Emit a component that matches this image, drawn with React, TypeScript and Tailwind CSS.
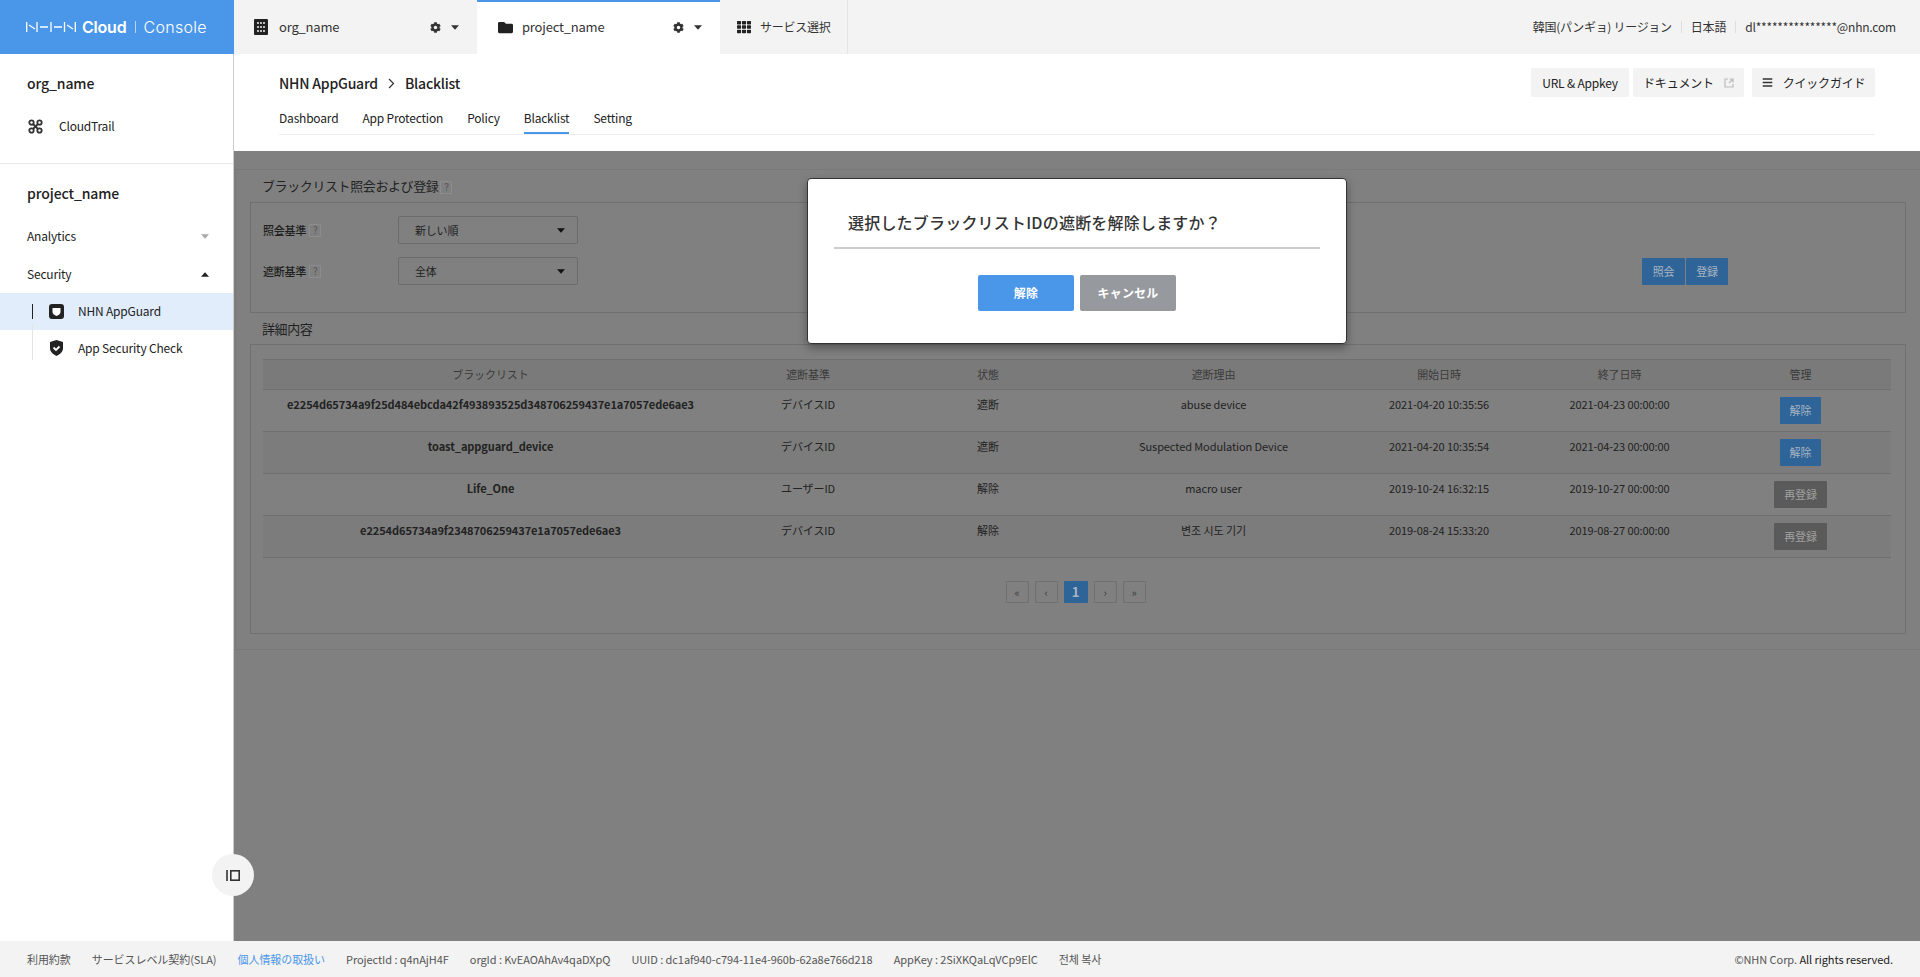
import { FaCog, FaFolder, FaTh, FaBars } from "react-icons/fa";

const font = { fontFamily: '"Noto Sans CJK JP", "Noto Sans CJK KR", sans-serif' };

function Caret({ up, className }: { up?: boolean; className?: string }) {
  return (
    <svg width="8" height="5" viewBox="0 0 9 5" className={className}>
      <path d={up ? "M4.5 0 9 5H0z" : "M0 0h9L4.5 5z"} fill="currentColor" />
    </svg>
  );
}

function Help() {
  return (
    <span className="inline-flex h-[13px] w-[12px] items-center justify-center border border-[#8c8c8c] text-[10px] leading-none font-normal text-[#555]">
      ?
    </span>
  );
}

const rows = [
  ["e2254d65734a9f25d484ebcda42f493893525d348706259437e1a7057ede6ae3", "デバイスID", "遮断", "abuse device", "2021-04-20 10:35:56", "2021-04-23 00:00:00", "解除"],
  ["toast_appguard_device", "デバイスID", "遮断", "Suspected Modulation Device", "2021-04-20 10:35:54", "2021-04-23 00:00:00", "解除"],
  ["Life_One", "ユーザーID", "解除", "macro user", "2019-10-24 16:32:15", "2019-10-27 00:00:00", "再登録"],
  ["e2254d65734a9f2348706259437e1a7057ede6ae3", "デバイスID", "解除", "변조 시도 기기", "2019-08-24 15:33:20", "2019-08-27 00:00:00", "再登録"],
];

function TopBar() {
  return (
    <div className="flex h-[54px] shrink-0 bg-[#f3f3f3] text-[#333]">
      <div className="flex w-[234px] items-center bg-[#4a96e8] pl-[26px] text-white" style={{ fontFamily: "Inter, sans-serif" }}>
        <svg width="50" height="10" viewBox="0 0 50 10" fill="none" stroke="white" strokeWidth="1.3">
          <path d="M.7 0v10M3 3l6 4M11 0v10M14 5h8M25 0v10M28 5h8M38.500 0v10M41 3l6 4M49.300 0v10" />
        </svg>
        <span className="ml-[6px] text-[16px] font-semibold tracking-[-0.2px]">Cloud</span>
        <span className="mx-[8px] h-[12px] w-px bg-white/60" />
        <span className="text-[16px] font-light tracking-[0.3px]">Console</span>
      </div>
      <div className="flex w-[243px] items-center pr-[18px] pl-[20px]">
        <svg width="14" height="16" viewBox="0 0 14 16" className="text-[#222]">
          <rect width="14" height="16" rx="1" fill="currentColor" />
          <path d="M3 3h2v2H3zM6 3h2v2H6zM9 3h2v2H9zM3 7h2v2H3zM6 7h2v2H6zM9 7h2v2H9zM3 11h2v2H3zM6 11h2v2H6zM9 11h2v2H9z" fill="#bbb" />
        </svg>
        <span className="ml-[11px] text-[13px]">org_name</span>
        <FaCog className="mr-[10px] ml-auto text-[11px] text-[#333]" />
        <Caret className="text-[#333]" />
      </div>
      <div className="flex w-[243px] items-center border-t-[2px] border-[#4a96e8] bg-white pr-[18px] pb-[2px] pl-[21px]">
        <FaFolder className="text-[15px] text-[#222]" />
        <span className="ml-[9px] text-[13px]">project_name</span>
        <FaCog className="mr-[10px] ml-auto text-[11px] text-[#333]" />
        <Caret className="text-[#333]" />
      </div>
      <div className="flex w-[128px] items-center border-r border-[#e4e4e4] pl-[17px]">
        <FaTh className="text-[14px] text-[#222]" />
        <span className="ml-[9px] text-[12px] tracking-[-0.25px]">サービス選択</span>
      </div>
      <div className="flex flex-1 items-center justify-end pr-[24px] text-[12px]">
        <span className="tracking-[-0.3px]">韓国(パンギョ) リージョン</span>
        <span className="mx-[9px] h-[12px] w-px bg-[#ddd]" />
        <span>日本語</span>
        <span className="mx-[9px] h-[12px] w-px bg-[#ddd]" />
        <span>dl***************@nhn.com</span>
      </div>
    </div>
  );
}

function Sidebar() {
  return (
    <div className="w-[234px] shrink-0 border-r border-[#ccc] bg-white text-[#222]">
      <div className="h-[110px] border-b border-[#e8e8e8] pt-[17px] pl-[27px]">
        <div className="text-[14px] leading-[24px] font-medium tracking-[-0.1px]">org_name</div>
        <div className="mt-[19px] flex h-[24px] items-center text-[12px]">
          <svg width="15" height="15" viewBox="0 0 15 15" className="ml-[1px]" fill="none" stroke="#333" strokeWidth="1.8">
            <circle cx="3.5" cy="3.5" r="2.2" />
            <circle cx="11.5" cy="3.5" r="2.2" />
            <circle cx="3.5" cy="11.5" r="2.2" />
            <circle cx="11.5" cy="11.5" r="2.2" />
            <path d="M5 5l5 5M10 5l-5 5" />
          </svg>
          <span className="ml-[16px]">CloudTrail</span>
        </div>
      </div>
      <div className="pt-[17px]">
        <div className="pl-[27px] text-[14px] leading-[24px] font-medium tracking-[-0.1px]">project_name</div>
        <div className="mt-[19px] flex h-[24px] items-center justify-between pr-[24px] pl-[27px] text-[12px]">
          <span>Analytics</span>
          <Caret className="text-[#aaa]" />
        </div>
        <div className="mt-[14px] flex h-[24px] items-center justify-between pr-[24px] pl-[27px] text-[12px]">
          <span>Security</span>
          <Caret up className="text-[#222]" />
        </div>
        <div className="mt-[7px] flex h-[37px] items-center bg-[#e1edfb] pb-[1px] pl-[32px] text-[12px]">
          <span className="h-[15px] w-px bg-[#222]" />
          <svg width="15" height="15" viewBox="0 0 15 15" className="ml-[16px]">
            <rect width="15" height="15" rx="3" fill="#222" />
            <path d="M3.5 4h8v4c0 2-2 3-4 4-2-1-4-2-4-4z" fill="#fff" />
          </svg>
          <span className="ml-[14px]">NHN AppGuard</span>
        </div>
        <div className="flex h-[37px] items-center pb-[1px] pl-[32px] text-[12px]">
          <span className="h-[37px] w-px -translate-y-[7px] bg-[#e4e4e4]" />
          <svg width="15" height="16" viewBox="0 0 15 16" className="ml-[16px]">
            <path d="M7.5 0 14 2v6c0 4-3 6-6.500 8C4 14 1 12 1 8V2z" fill="#222" />
            <path d="M4.500 7.500 7 10l3.500-3.500" fill="none" stroke="#fff" strokeWidth="1.800" />
          </svg>
          <span className="ml-[14px]">App Security Check</span>
        </div>
      </div>
    </div>
  );
}

function Header() {
  return (
    <div className="h-[97px] shrink-0 bg-white px-[45px] text-[#222]">
      <div className="flex h-[81px] flex-col border-b border-[#eee]">
        <div className="flex items-start justify-between pt-[14px]">
          <div className="flex items-center pt-[3px] text-[14px] leading-[24px] font-medium tracking-[-0.2px]">
            <span>NHN AppGuard</span>
            <svg width="7" height="11" viewBox="0 0 7 11" className="mx-[10px]" fill="none" stroke="#333" strokeWidth="1.2">
              <path d="M1 1l4.500 4.500L1 10" />
            </svg>
            <span>Blacklist</span>
          </div>
          <div className="flex text-[12px]">
            <div className="flex h-[29px] w-[98px] items-center justify-center rounded-[2px] bg-[#f3f3f3]">URL &amp; Appkey</div>
            <div className="ml-[4px] flex h-[29px] w-[111px] items-center justify-center rounded-[2px] bg-[#f3f3f3]">
              ドキュメント
              <svg width="10" height="10" viewBox="0 0 10 10" className="ml-[10px]" fill="none" stroke="#bbb" strokeWidth="1.200">
                <path d="M4 1H1v8h8V6M5.500 1H9v3.500M9 1 5 5" />
              </svg>
            </div>
            <div className="ml-[8px] flex h-[29px] w-[123px] items-center justify-center rounded-[2px] bg-[#f3f3f3]">
              <FaBars className="mr-[10px] text-[11px] text-[#333]" />
              クイックガイド
            </div>
          </div>
        </div>
        <div className="mt-[9px] flex gap-[24px] text-[12px]">
          {["Dashboard", "App Protection", "Policy", "Blacklist", "Setting"].map((t) => (
            <div key={t} className={t === "Blacklist" ? "h-[28px] border-b-[2px] border-[#4a96e8] leading-[24px]" : "h-[28px] leading-[24px]"}>
              {t}
            </div>
          ))}
        </div>
      </div>
    </div>
  );
}

function SearchBox() {
  return (
    <div className="h-[111px] border border-[#707070] px-[12px] pt-[13px] text-[11px] text-[#1e1e1e]">
      <div className="flex items-center justify-between">
        <div>
          <div className="flex h-[28px] items-center">
            <div className="flex w-[135px] items-center gap-[3px] font-medium">
              照会基準 <Help />
            </div>
            <div className="flex h-[28px] w-[180px] items-center justify-between rounded-[2px] border border-[#6b6b6b] pr-[12px] pl-[16px] text-[#222]">
              新しい順 <Caret className="text-[#111]" />
            </div>
          </div>
          <div className="mt-[13px] flex h-[28px] items-center">
            <div className="flex w-[135px] items-center gap-[3px] font-medium">
              遮断基準 <Help />
            </div>
            <div className="flex h-[28px] w-[180px] items-center justify-between rounded-[2px] border border-[#6b6b6b] pr-[12px] pl-[16px] text-[#222]">
              全体 <Caret className="text-[#111]" />
            </div>
          </div>
        </div>
        <div className="mt-[41px] mr-[165px] flex gap-px text-[#a8b4c0]">
          <div className="flex h-[27px] w-[43px] items-center justify-center rounded-[1px] bg-[#2f6499]">照会</div>
          <div className="flex h-[27px] w-[42px] items-center justify-center rounded-[1px] bg-[#2f6499]">登録</div>
        </div>
      </div>
    </div>
  );
}

function BlackTable() {
  return (
    <table className="w-[1628px] table-fixed border-collapse text-center text-[11px] tracking-[-0.008em] text-[#222]">
      <colgroup>
        <col className="w-[455px]" />
        <col className="w-[180px]" />
        <col className="w-[180px]" />
        <col className="w-[271px]" />
        <col className="w-[180px]" />
        <col className="w-[181px]" />
        <col className="w-[181px]" />
      </colgroup>
      <thead>
        <tr className="h-[30px] border-y border-[#6f6f6f] bg-[#7a7a7a] text-[#3a3a3a]">
          {["ブラックリスト", "遮断基準", "状態", "遮断理由", "開始日時", "終了日時", "管理"].map((h) => (
            <th key={h} className="font-normal">{h}</th>
          ))}
        </tr>
      </thead>
      <tbody>
        {rows.map((r, i) => (
          <tr key={r[0]} className={i % 2 === 0 ? "h-[42px] border-b border-[#6f6f6f]" : "h-[42px] border-b border-[#6f6f6f] bg-[#7c7c7c]"}>
            <td className="h-[42px] pt-[6px] align-top font-bold">{r[0]}</td>
            <td className="pt-[6px] align-top">{r[1]}</td>
            <td className="pt-[6px] align-top">{r[2]}</td>
            <td className="pt-[6px] align-top">{r[3]}</td>
            <td className="pt-[6px] align-top">{r[4]}</td>
            <td className="pt-[6px] align-top">{r[5]}</td>
            <td className="align-top">
              <div
                className={
                  r[6] === "解除"
                    ? "mx-auto mt-[7px] flex h-[27px] w-[41px] items-center justify-center rounded-[1px] bg-[#2f6499] text-[#a8b4c0]"
                    : "mx-auto mt-[7px] flex h-[27px] w-[53px] items-center justify-center rounded-[1px] bg-[#5a5a5a] text-[#a0a0a0]"
                }
              >
                {r[6]}
              </div>
            </td>
          </tr>
        ))}
      </tbody>
    </table>
  );
}

function Pager() {
  const base = "flex h-[22px] w-[23px] items-center justify-center rounded-[1px] border border-[#6f6f6f] text-[11px] text-[#3a3a3a]";
  return (
    <div className="mt-[23px] flex justify-center gap-[6px] pr-[5px]">
      <div className={base}>«</div>
      <div className={base}>‹</div>
      <div className="flex h-[22px] w-[24px] items-center justify-center rounded-[1px] bg-[#2f6499] text-[13px] font-bold text-[#a8b4c0]">1</div>
      <div className={base}>›</div>
      <div className={base}>»</div>
    </div>
  );
}

function Footer() {
  return (
    <div className="flex h-[36px] shrink-0 items-center justify-between bg-[#f3f3f3] pr-[27px] pl-[27px] text-[11px] tracking-[-0.006em] text-[#555]">
      <div className="flex gap-[21px]">
        <span>利用約款</span>
        <span>サービスレベル契約(SLA)</span>
        <span className="text-[#4a96e8]">個人情報の取扱い</span>
        <span>ProjectId : q4nAjH4F</span>
        <span>orgId : KvEAOAhAv4qaDXpQ</span>
        <span>UUID : dc1af940-c794-11e4-960b-62a8e766d218</span>
        <span>AppKey : 2SiXKQaLqVCp9ElC</span>
        <span>전체 복사</span>
      </div>
      <span>
        ©NHN Corp. <span className="text-[#222]">All rights reserved.</span>
      </span>
    </div>
  );
}

export default function App() {
  return (
    <div style={font} className="relative flex h-screen flex-col overflow-hidden bg-white tracking-[-0.012em]">
      <TopBar />
      <div className="flex min-h-0 flex-1">
        <Sidebar />
        <div className="flex min-w-0 flex-1 flex-col">
          <Header />
          <div className="flex-1 bg-[#808080] pt-[18px] pl-[1px]">
            <div className="h-[481px] border-t border-b border-l border-[#797979] px-[14px]">
              <div className="flex h-[32px] items-center pl-[12px] text-[13px] tracking-[-0.4px] text-[#222]">
                ブラックリスト照会および登録
                <span className="ml-[2px]"><Help /></span>
              </div>
              <SearchBox />
              <div className="flex h-[31px] items-center pl-[12px] text-[13px] tracking-[-0.4px] text-[#222]">詳細内容</div>
              <div className="h-[290px] border border-[#707070] px-[12px] pt-[14px]">
                <BlackTable />
                <Pager />
              </div>
            </div>
          </div>
        </div>
      </div>
      <Footer />

      <div className="absolute top-[854px] left-[212px] flex h-[42px] w-[42px] items-center justify-center rounded-full bg-[#f3f3f3]">
        <svg width="14" height="11" viewBox="0 0 14 11" fill="none" stroke="#333" strokeWidth="1.600">
          <path d="M1 0v11" />
          <rect x="4.800" y=".8" width="8.400" height="9.400" />
        </svg>
      </div>

      <div className="absolute top-[178px] left-[807px] h-[166px] w-[540px] rounded-[4px] border border-[#333] bg-white px-[26px] tracking-[0.2px] shadow-[0_4px_10px_rgba(0,0,0,0.35)]">
        <div className="h-[70px] border-b-[2px] border-[#ccc] pt-[27px] pl-[14px] text-[16px] leading-[32px] font-medium text-[#333]">
          選択したブラックリストIDの遮断を解除しますか？
        </div>
        <div className="mt-[26px] flex justify-center gap-[6px] text-[12px] font-bold text-white">
          <div className="flex h-[36px] w-[96px] items-center justify-center rounded-[2px] bg-[#4a96e8]">解除</div>
          <div className="flex h-[36px] w-[96px] items-center justify-center rounded-[2px] bg-[#96999e]">キャンセル</div>
        </div>
      </div>
    </div>
  );
}
